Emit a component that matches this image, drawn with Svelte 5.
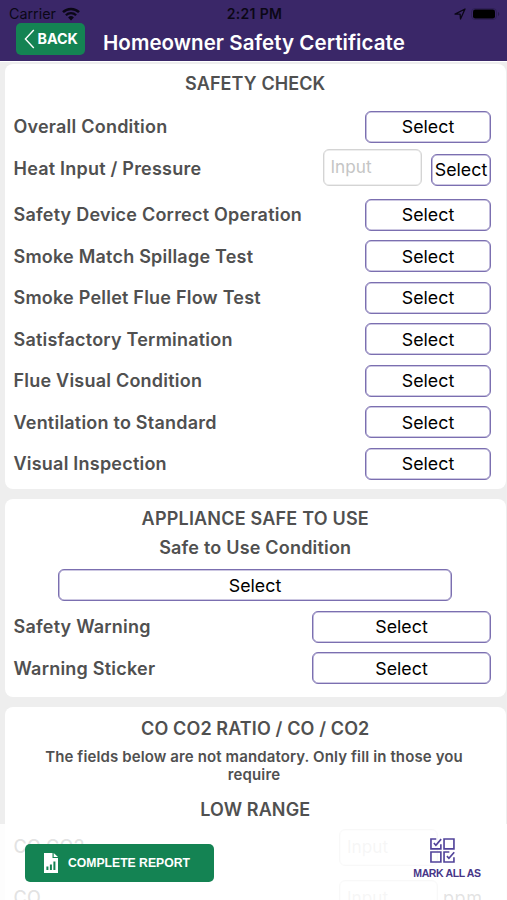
<script>
  const checks = [
    'Safety Device Correct Operation',
    'Smoke Match Spillage Test',
    'Smoke Pellet Flue Flow Test',
    'Satisfactory Termination',
    'Flue Visual Condition',
    'Ventilation to Standard',
    'Visual Inspection'
  ];

  const warnings = ['Safety Warning', 'Warning Sticker'];

  const readings = [
    { label: 'CO CO2', unit: '' },
    { label: 'CO', unit: 'ppm' }
  ];
</script>

<div class="screen">
  <header>
    <div class="status">
      <div class="carrier">
        <span>Carrier</span>
        <svg width="18" height="14" viewBox="0 0 18 14" fill="none" stroke="#0b0716">
          <path d="M1 5.2a11.4 11.4 0 0 1 16 0" stroke-width="2.5" />
          <path d="M3.9 8.2a7.2 7.2 0 0 1 10.2 0" stroke-width="2.3" />
          <path d="M9 13.4 6.1 10.4a4.1 4.1 0 0 1 5.8 0z" fill="#0b0716" stroke="none" />
        </svg>
      </div>
      <span class="time">2:21 PM</span>
      <div class="indicators">
        <svg width="12" height="12" viewBox="0 0 12 12" fill="none" stroke="#0b0716" stroke-width="1.3" stroke-linejoin="round">
          <path d="M1 6.1 11 1 6.5 11 6.1 6.1z" />
        </svg>
        <svg width="29" height="12" viewBox="0 0 29 12">
          <rect x="0.5" y="0.5" width="25" height="11" rx="3.5" fill="none" stroke="#2f2057" />
          <rect x="2" y="1.5" width="22" height="9" rx="2.3" fill="#000" />
          <path d="M27 4v4a2.2 2.2 0 0 0 0-4z" fill="#281b4a" />
        </svg>
      </div>
    </div>
    <div class="nav">
      <button class="back">
        <svg width="11" height="20" viewBox="0 0 11 20" fill="none" stroke="#fff" stroke-width="1.4">
          <path d="M9.8 1 1.4 10l8.4 9" />
        </svg>
        <span>BACK</span>
      </button>
      <h1>Homeowner Safety Certificate</h1>
    </div>
  </header>

  <main>
    <section class="card">
      <h2 class="check-title">SAFETY CHECK</h2>
      <div class="row">
        <span>Overall Condition</span>
        <button class="select">Select</button>
      </div>
      <div class="row pressure">
        <span>Heat Input / Pressure</span>
        <input placeholder="Input" />
        <button class="select small">Select</button>
      </div>
      {#each checks as check}
        <div class="row">
          <span>{check}</span>
          <button class="select">Select</button>
        </div>
      {/each}
    </section>

    <section class="card safe">
      <h2 class="safe-title">APPLIANCE SAFE TO USE</h2>
      <h3>Safe to Use Condition</h3>
      <button class="select full">Select</button>
      {#each warnings as warning}
        <div class="row">
          <span>{warning}</span>
          <button class="select wide">Select</button>
        </div>
      {/each}
    </section>

    <section class="card ratio">
      <h2 class="ratio-title">CO CO2 RATIO / CO / CO2</h2>
      <p>The fields below are not mandatory. Only fill in those you require</p>
      <h2 class="range-title">LOW RANGE</h2>
      {#each readings as reading}
        <div class="row reading">
          <span>{reading.label}</span>
          <input placeholder="Input" />
          <em>{reading.unit}</em>
        </div>
      {/each}
    </section>
  </main>

  <footer>
    <button class="complete">
      <svg width="14" height="20" viewBox="0 0 14 20">
        <path d="M0 0h8.5v5H14v15H0z" fill="#fff" />
        <path d="M9.7 0 14 4H9.7z" fill="#fff" />
        <path d="M2.4 13.5h2V17h-2zM5.9 11.5h2V17h-2zM9.4 8.5h2V17h-2z" fill="#148353" />
      </svg>
      <span>COMPLETE REPORT</span>
    </button>
    <button class="mark">
      <svg width="25" height="25" viewBox="0 0 26 26" fill="none" stroke="#51439a" stroke-width="1.7">
        <path d="M6.5 1H1v10.3h10.3V6.5" />
        <path d="M4 5.2 6.1 7.5 11.6 1.2" />
        <path d="M14.6 1h10.3v10.3H14.6z" />
        <path d="M1 14.6h10.3v10.3H1z" />
        <path d="M20.1 14.6h-5.5v10.3h10.3v-4.8" />
        <path d="M17.6 18.8l2.1 2.3 5.5-6.3" />
      </svg>
      <span>MARK ALL AS</span>
    </button>
  </footer>
</div>

<style>
  :global(body) {
    margin: 0;
  }

  .screen {
    position: relative;
    width: 507px;
    height: 900px;
    overflow: hidden;
    background: #eee;
    color: #505050;
    font-family: Inter, 'Liberation Sans', sans-serif;
  }

  button {
    display: flex;
    align-items: center;
    box-sizing: border-box;
    margin: 0;
    padding: 0;
    border: 0;
    background: none;
    font-family: inherit;
    white-space: nowrap;
  }

  svg {
    display: block;
    flex: none;
  }

  header {
    height: 61px;
    background: #3a2768;
    border-bottom: 1px solid #fff;
  }

  .status {
    display: grid;
    grid-template-columns: 1fr auto 1fr;
    align-items: center;
    height: 23px;
    padding: 4px 7px 0 9px;
    box-sizing: border-box;
    color: #0b0716;
    font-size: 14.3px;
  }

  .carrier {
    display: flex;
    align-items: center;
    gap: 6px;
  }

  .time {
    font-size: 14px;
    font-weight: 600;
    letter-spacing: 0.3px;
  }

  .indicators {
    display: flex;
    align-items: center;
    justify-content: flex-end;
    gap: 5px;
  }

  .nav {
    display: flex;
    align-items: flex-start;
    padding-left: 15.5px;
  }

  .back {
    width: 69px;
    height: 32px;
    padding: 0 0 1px 8px;
    gap: 3px;
    border-radius: 5px;
    background: #148353;
    color: #fff;
    font-size: 14.3px;
    font-weight: 700;
  }

  h1 {
    margin: 7px 0 0 18.5px;
    color: #fff;
    font-size: 20.5px;
    font-weight: 600;
    line-height: 26px;
    letter-spacing: 0.06px;
    white-space: nowrap;
  }

  main {
    display: flex;
    flex-direction: column;
    gap: 10px;
    padding: 2px 1px 0 4.5px;
  }

  .card {
    box-sizing: border-box;
    height: 425px;
    padding: 0 15px 0 9px;
    border-radius: 8px;
    background: #fff;
  }

  .safe {
    height: 198px;
  }

  .ratio {
    height: 230px;
  }

  h2,
  h3 {
    margin: 0 -6px 0 0;
    font-size: 18px;
    font-weight: 600;
    line-height: 24px;
    letter-spacing: 0.2px;
    text-align: center;
  }

  .check-title {
    padding: 8px 0 10px;
    letter-spacing: 0.1px;
  }

  .safe-title {
    padding-top: 8px;
  }

  h3 {
    margin-top: 5px;
    margin-bottom: 9px;
  }

  .row {
    display: flex;
    align-items: center;
    justify-content: space-between;
    height: 41.5px;
    font-size: 18px;
    font-weight: 600;
    letter-spacing: 0.22px;
    white-space: nowrap;
  }

  .select {
    justify-content: center;
    width: 126px;
    height: 32px;
    border: 1px solid #7b6fb0;
    border-radius: 6px;
    box-shadow: inset 0 0 0 0.6px #9b92c6;
    background: #fff;
    color: #000;
    font-size: 17.8px;
    letter-spacing: 0;
  }

  .wide {
    width: 179px;
  }

  .full {
    width: 394px;
    margin: 0 0 5px 44.5px;
  }

  .pressure {
    align-items: flex-start;
    height: 46.5px;
  }

  .pressure span {
    flex: 1;
    line-height: 41px;
  }

  .small {
    width: 60px;
    margin: 6px 0 0 9.5px;
  }

  input {
    box-sizing: border-box;
    width: 99px;
    height: 37px;
    margin: 1px 0 0;
    padding: 0 7px 2px;
    border: 1px solid #d4d4d4;
    border-radius: 6px;
    box-shadow: inset 0 0 0 0.5px #dedede;
    background: #fff;
    font-family: inherit;
    font-size: 17.2px;
  }

  input::placeholder {
    color: #c5c5c5;
    opacity: 1;
  }

  p {
    width: 440px;
    margin: 7px 18px 14px 20.5px;
    font-size: 15px;
    font-weight: 600;
    line-height: 18px;
    letter-spacing: 0.12px;
    text-align: center;
  }

  .ratio-title {
    padding-top: 10px;
    letter-spacing: 0.12px;
  }

  .range-title {
    margin-bottom: -1px;
    letter-spacing: 0.12px;
  }

  .reading {
    height: 51px;
    font-weight: 500;
  }

  .reading span {
    flex: 1;
  }

  .reading em {
    width: 48px;
    margin-left: 5px;
    font-style: normal;
    font-weight: 400;
    letter-spacing: 0.6px;
  }

  footer {
    position: absolute;
    right: 0;
    bottom: 0;
    left: 0;
    display: flex;
    justify-content: space-between;
    height: 76px;
    box-sizing: border-box;
    padding: 13.5px 19px 0 25px;
    background: rgba(255, 255, 255, 0.84);
  }

  .complete {
    width: 189px;
    height: 38px;
    margin-top: 6.5px;
    padding-left: 19px;
    gap: 10px;
    border-radius: 5px;
    background: #148353;
    color: #fff;
    font-family: 'Liberation Sans', sans-serif;
    font-size: 12.2px;
    font-weight: 700;
  }

  .mark {
    flex-direction: column;
    justify-content: flex-start;
    width: 82px;
    height: 43px;
    gap: 4px;
    color: #463587;
    font-family: 'Liberation Sans', sans-serif;
    font-size: 10.5px;
    font-weight: 700;
    letter-spacing: -0.35px;
  }

  .mark svg {
    margin-right: 9px;
  }
</style>
